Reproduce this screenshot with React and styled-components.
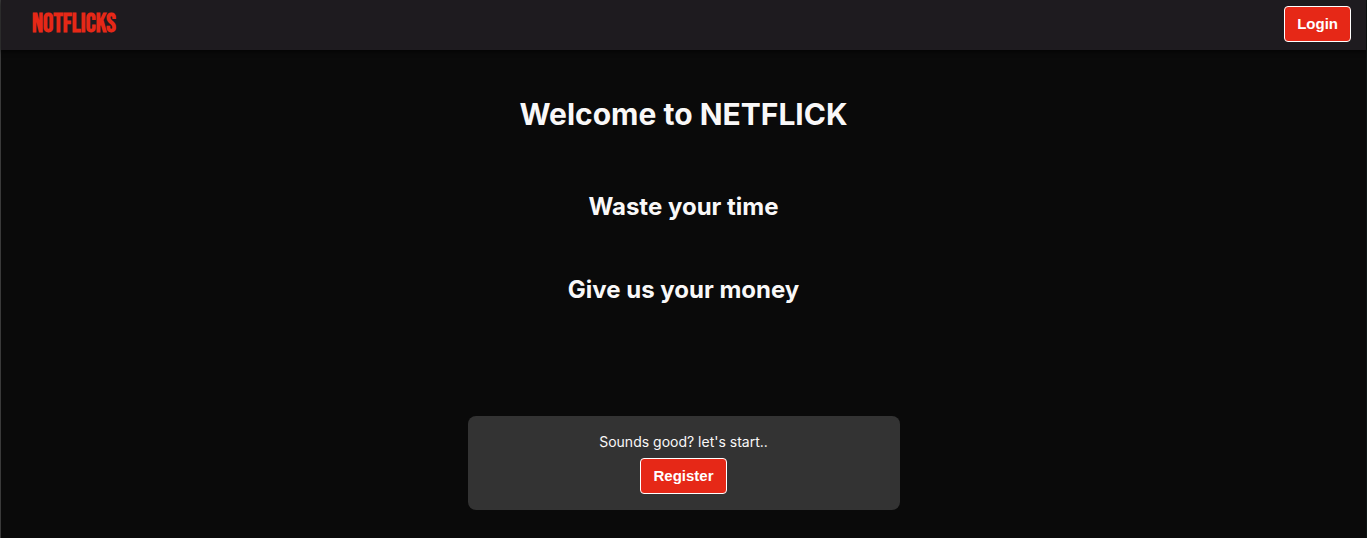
import React from "react";
import styled, { createGlobalStyle } from "styled-components";

const GlobalStyle = createGlobalStyle`
  *, *::before, *::after { box-sizing: border-box; }
  body {
    margin: 0;
    background: #0a0a0a;
    color: #f9f8f8;
    font-family: Inter, "Liberation Sans", sans-serif;
  }
  h1, h2, p { margin: 0; }
`;

const Page = styled.div`
  min-height: 100vh;
  border-left: 1px solid #3a3a3a;
  border-right: 1px solid #0d1413;
`;

const Header = styled.header`
  display: flex;
  align-items: flex-start;
  justify-content: space-between;
  height: 50px;
  padding: 6px 15px 0 31px;
  background: #1e1b1f;
  box-shadow: 0 2px 4px rgba(0, 0, 0, 0.6);
`;

const Logo = styled.a`
  color: #e62817;
  font-family: "Bebas Neue", "Liberation Sans Narrow", "Liberation Sans", sans-serif;
  font-size: 26px;
  font-weight: 700;
  line-height: 38px;
  text-decoration: none;
`;

const Button = styled.button`
  height: 36px;
  padding: 0 12px;
  border: 1px solid #ffffff;
  border-radius: 4px;
  background: #e62817;
  color: #ffffff;
  font-family: "Liberation Sans", Arial, sans-serif;
  font-size: 15px;
  font-weight: 700;
  line-height: 20px;
  cursor: pointer;
`;

const Main = styled.main`
  display: flex;
  flex-direction: column;
  align-items: center;
  padding: 44px 16px 28px;
  text-align: center;
`;

const Title = styled.h1`
  font-size: 30px;
  font-weight: 700;
  line-height: 40px;
`;

const Taglines = styled.div`
  display: grid;
  gap: 51px;
  margin: 57px 0 110px;
`;

const Tagline = styled.h2`
  font-size: 24px;
  font-weight: 700;
  line-height: 32px;
`;

const Card = styled.section`
  display: flex;
  flex-direction: column;
  align-items: center;
  gap: 6px;
  width: 432px;
  max-width: 100%;
  padding: 16px;
  border-radius: 8px;
  background: #333333;
`;

const Prompt = styled.p`
  font-size: 14px;
  line-height: 20px;
`;

export default function App() {
  return (
    <>
      <GlobalStyle />
      <Page>
        <Header>
          <Logo href="#">NOTFLICKS</Logo>
          <Button type="button">Login</Button>
        </Header>
        <Main>
          <Title>Welcome to NETFLICK</Title>
          <Taglines>
            <Tagline>Waste your time</Tagline>
            <Tagline>Give us your money</Tagline>
          </Taglines>
          <Card>
            <Prompt>Sounds good? let's start..</Prompt>
            <Button type="button">Register</Button>
          </Card>
        </Main>
      </Page>
    </>
  );
}
